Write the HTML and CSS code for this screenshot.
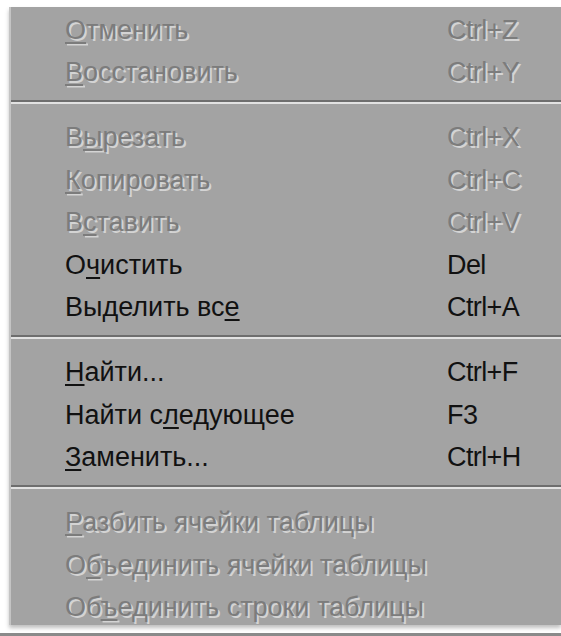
FILE: index.html
```html
<!DOCTYPE html>
<html lang="ru">
<head>
<meta charset="utf-8">
<title>Правка</title>
<link rel="stylesheet" href="styles.css">
</head>
<body>
<div class="screen">
  <div class="menu">
    <div class="item disabled"><span class="label"><u>О</u>тменить</span><span class="key">Ctrl+Z</span></div>
    <div class="item disabled"><span class="label"><u>В</u>осстановить</span><span class="key">Ctrl+Y</span></div>
    <div class="sep"></div>
    <div class="item disabled"><span class="label">В<u>ы</u>резать</span><span class="key">Ctrl+X</span></div>
    <div class="item disabled"><span class="label"><u>К</u>опировать</span><span class="key">Ctrl+C</span></div>
    <div class="item disabled"><span class="label">В<u>с</u>тавить</span><span class="key">Ctrl+V</span></div>
    <div class="item"><span class="label">О<u>ч</u>истить</span><span class="key">Del</span></div>
    <div class="item"><span class="label">Выделить вс<u>е</u></span><span class="key">Ctrl+A</span></div>
    <div class="sep"></div>
    <div class="item"><span class="label"><u>Н</u>айти...</span><span class="key">Ctrl+F</span></div>
    <div class="item"><span class="label">Найти с<u>л</u>едующее</span><span class="key">F3</span></div>
    <div class="item"><span class="label"><u>З</u>аменить...</span><span class="key">Ctrl+H</span></div>
    <div class="sep"></div>
    <div class="item disabled"><span class="label"><u>Р</u>азбить ячейки таблицы</span><span class="key"></span></div>
    <div class="item disabled"><span class="label">О<u>б</u>ъединить ячейки таблицы</span><span class="key"></span></div>
    <div class="item disabled"><span class="label">Об<u>ъ</u>единить строки таблицы</span><span class="key"></span></div>
  </div>
  <div class="floor"></div>
</div>
</body>
</html>
```

FILE: styles.css
```css
html, body {
  margin: 0;
  padding: 0;
  background: #ffffff;
}

.screen {
  width: 561px;
  height: 636px;
  overflow: hidden;
  display: flex;
  flex-direction: column;
}

.menu {
  margin: 7px 0 0 9px;
  padding-top: 2px;
  width: 552px;
  height: 618px;
  box-sizing: border-box;
  background: #a3a3a3;
  border-left: 2px solid #c4c4c4;
  box-shadow: 0 3px 4px rgba(0, 0, 0, 0.25);
  display: flex;
  flex-direction: column;
  font-family: "Liberation Sans", Arial, sans-serif;
  font-size: 27px;
  color: #111111;
}

.item {
  height: 42.5px;
  flex: none;
  display: grid;
  grid-template-columns: 382px 1fr;
  align-items: center;
  padding-left: 54px;
}

.item u {
  text-decoration-thickness: 2px;
  text-underline-offset: 3px;
}

.item.disabled {
  color: #7c7c7c;
  text-shadow: 2px 1.5px 0 #d4d4d4;
}

.item.disabled u {
  text-decoration-color: #7c7c7c;
}

.key {
  white-space: nowrap;
  letter-spacing: -0.6px;
}

.sep {
  height: 22.5px;
  flex: none;
  box-sizing: border-box;
  padding-top: 6px;
}

.sep::before {
  content: "";
  display: block;
  height: 2px;
  background: #6e6e6e;
  border-bottom: 2px solid #e2e2e2;
}

.floor {
  margin-top: auto;
  height: 3px;
  background: #8a8a8a;
}
```
